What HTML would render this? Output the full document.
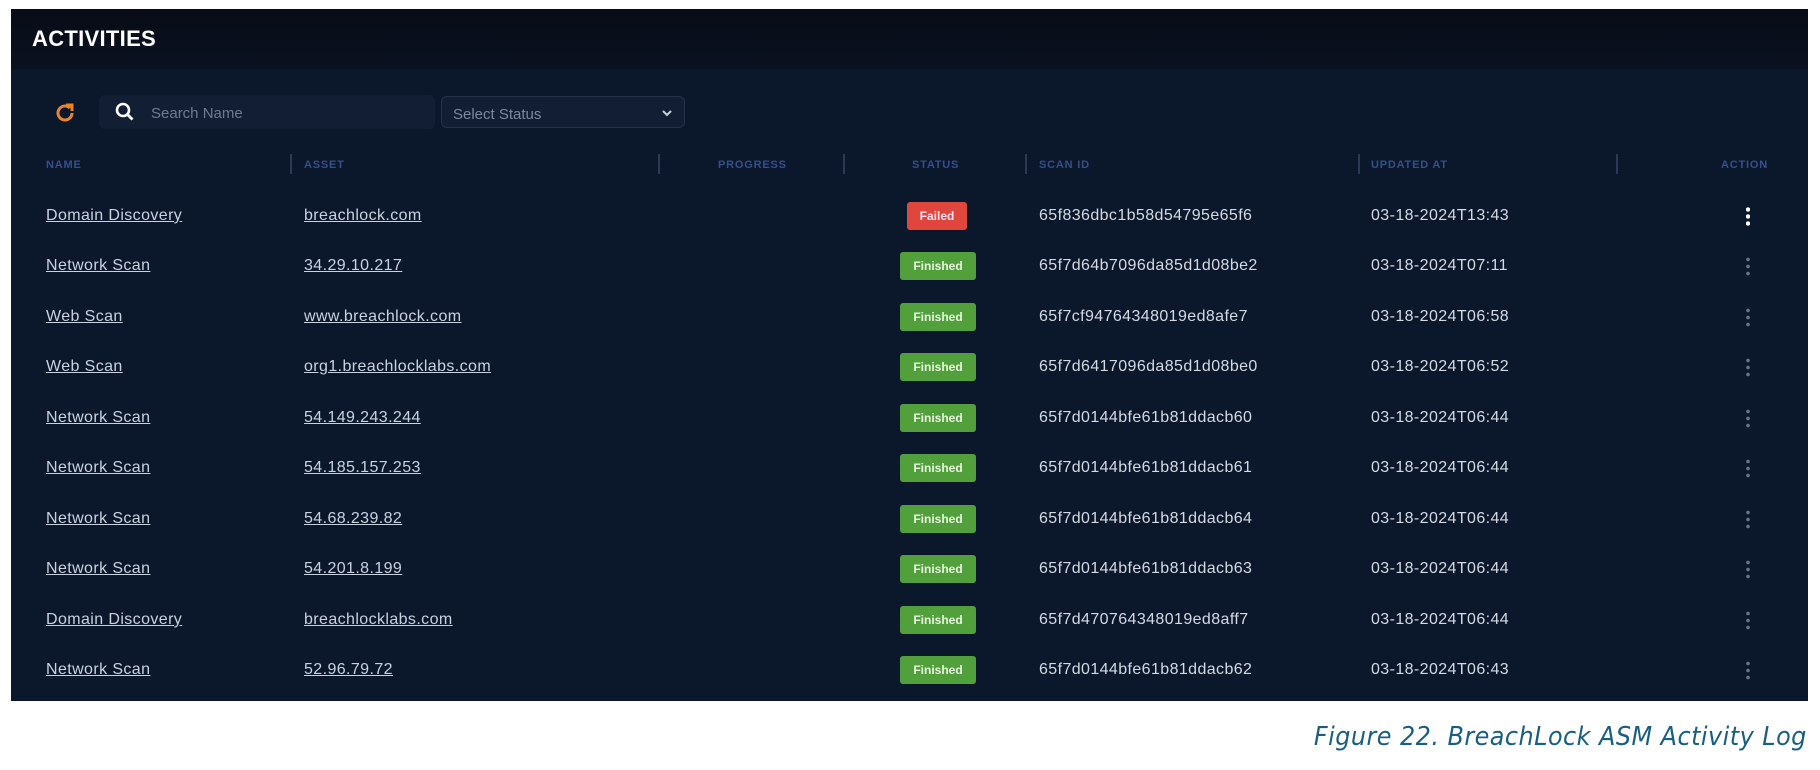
<!DOCTYPE html>
<html><head><meta charset="utf-8"><style>
*{margin:0;padding:0;box-sizing:border-box}
body{width:1820px;height:770px;background:#fff;position:relative;font-family:"Liberation Sans",sans-serif;overflow:hidden}
#panel{position:absolute;left:11px;top:9px;width:1797px;height:692px;background:#0b182c;overflow:hidden}
#hdr{position:absolute;left:0;top:0;width:100%;height:60px;background:linear-gradient(#070c16,#0a1120)}
#hdr h1{position:absolute;left:21px;top:17px;color:#fff;font-size:22px;font-weight:bold;letter-spacing:.3px}
.box{position:absolute;background:#111e33;border-radius:6px}
.t{position:absolute;white-space:nowrap}
.th{position:absolute;top:150px;font-size:11px;font-weight:bold;color:#34508a;letter-spacing:.8px}
.sep{position:absolute;top:145px;width:2px;height:20px;background:#2a3a55}
.row{position:absolute;left:0;width:100%;height:50px;font-size:16px;letter-spacing:.4px;color:#d4dae4}
.row span{position:absolute;top:50%;transform:translateY(-50%);white-space:nowrap}
.u{text-decoration:underline;color:#c9d2df}
.b{left:889px;width:76px;height:28px;background:#52a03c;color:#e8f5e0;font-size:12px!important;letter-spacing:0!important;font-weight:bold;text-align:center;line-height:28px;border-radius:3px}
.b.f{left:896px;width:60px;background:#e0473c;color:#fde}
.dots{left:1735px;width:4px;height:20px;letter-spacing:0;background:radial-gradient(circle,#6a7488 1.6px,transparent 2px) 0 0/4px 7px repeat-y}
.dots.w{background:radial-gradient(circle,#fff 2px,transparent 2.4px) 0 0/4px 7px repeat-y}
#cap{position:absolute;right:13px;top:722px;font-style:italic;font-size:26px;color:#1a5e80;font-family:"DejaVu Sans","Liberation Sans",sans-serif;letter-spacing:.5px;transform:scaleX(.92);transform-origin:right}
</style></head><body>
<div id="panel">
<div id="hdr"><h1>ACTIVITIES</h1></div>
<svg style="position:absolute;left:42px;top:92px" width="24" height="24" viewBox="0 0 24 24"><path d="M19 12a7 7 0 1 1-2.1-5" fill="none" stroke="#e8842c" stroke-width="3"/><path d="M13 4h6v6" fill="none" stroke="#e8842c" stroke-width="3"/></svg>
<div class="box" style="left:88px;top:86px;width:336px;height:34px"></div>
<svg style="position:absolute;left:103px;top:92px" width="22" height="22" viewBox="0 0 22 22"><circle cx="9" cy="9" r="6" fill="none" stroke="#fff" stroke-width="2.6"/><path d="M13.5 13.5l5 5" stroke="#fff" stroke-width="2.8"/></svg>
<div class="t" style="left:140px;top:96px;font-size:15px;color:#6f7b90">Search Name</div>
<div class="box" style="left:430px;top:87px;width:244px;height:32px;border:1px solid #24324a"></div>
<div class="t" style="left:442px;top:97px;font-size:15px;color:#7d889c">Select Status</div>
<svg style="position:absolute;left:650px;top:100px" width="12" height="8" viewBox="0 0 12 8"><path d="M2 2l4 4 4-4" fill="none" stroke="#c8d0dc" stroke-width="2"/></svg>
<div class="th" style="left:35px">NAME</div>
<div class="sep" style="left:279px"></div><div class="th" style="left:293px">ASSET</div>
<div class="sep" style="left:647px"></div><div class="th" style="left:707px">PROGRESS</div>
<div class="sep" style="left:832px"></div><div class="th" style="left:901px">STATUS</div>
<div class="sep" style="left:1014px"></div><div class="th" style="left:1028px">SCAN ID</div>
<div class="sep" style="left:1347px"></div><div class="th" style="left:1360px">UPDATED AT</div>
<div class="sep" style="left:1605px"></div><div class="th" style="left:1710px">ACTION</div>

<div class="row" style="top:182px"><span class="u" style="left:35px">Domain Discovery</span><span class="u" style="left:293px">breachlock.com</span><span class="b f">Failed</span><span style="left:1028px">65f836dbc1b58d54795e65f6</span><span style="left:1360px">03-18-2024T13:43</span><span class="dots w"></span></div>
<div class="row" style="top:232px"><span class="u" style="left:35px">Network Scan</span><span class="u" style="left:293px">34.29.10.217</span><span class="b">Finished</span><span style="left:1028px">65f7d64b7096da85d1d08be2</span><span style="left:1360px">03-18-2024T07:11</span><span class="dots"></span></div>
<div class="row" style="top:283px"><span class="u" style="left:35px">Web Scan</span><span class="u" style="left:293px">www.breachlock.com</span><span class="b">Finished</span><span style="left:1028px">65f7cf94764348019ed8afe7</span><span style="left:1360px">03-18-2024T06:58</span><span class="dots"></span></div>
<div class="row" style="top:333px"><span class="u" style="left:35px">Web Scan</span><span class="u" style="left:293px">org1.breachlocklabs.com</span><span class="b">Finished</span><span style="left:1028px">65f7d6417096da85d1d08be0</span><span style="left:1360px">03-18-2024T06:52</span><span class="dots"></span></div>
<div class="row" style="top:384px"><span class="u" style="left:35px">Network Scan</span><span class="u" style="left:293px">54.149.243.244</span><span class="b">Finished</span><span style="left:1028px">65f7d0144bfe61b81ddacb60</span><span style="left:1360px">03-18-2024T06:44</span><span class="dots"></span></div>
<div class="row" style="top:434px"><span class="u" style="left:35px">Network Scan</span><span class="u" style="left:293px">54.185.157.253</span><span class="b">Finished</span><span style="left:1028px">65f7d0144bfe61b81ddacb61</span><span style="left:1360px">03-18-2024T06:44</span><span class="dots"></span></div>
<div class="row" style="top:485px"><span class="u" style="left:35px">Network Scan</span><span class="u" style="left:293px">54.68.239.82</span><span class="b">Finished</span><span style="left:1028px">65f7d0144bfe61b81ddacb64</span><span style="left:1360px">03-18-2024T06:44</span><span class="dots"></span></div>
<div class="row" style="top:535px"><span class="u" style="left:35px">Network Scan</span><span class="u" style="left:293px">54.201.8.199</span><span class="b">Finished</span><span style="left:1028px">65f7d0144bfe61b81ddacb63</span><span style="left:1360px">03-18-2024T06:44</span><span class="dots"></span></div>
<div class="row" style="top:586px"><span class="u" style="left:35px">Domain Discovery</span><span class="u" style="left:293px">breachlocklabs.com</span><span class="b">Finished</span><span style="left:1028px">65f7d470764348019ed8aff7</span><span style="left:1360px">03-18-2024T06:44</span><span class="dots"></span></div>
<div class="row" style="top:636px"><span class="u" style="left:35px">Network Scan</span><span class="u" style="left:293px">52.96.79.72</span><span class="b">Finished</span><span style="left:1028px">65f7d0144bfe61b81ddacb62</span><span style="left:1360px">03-18-2024T06:43</span><span class="dots"></span></div>
</div>
<div id="cap">Figure 22. BreachLock ASM Activity Log</div>
</body></html>
